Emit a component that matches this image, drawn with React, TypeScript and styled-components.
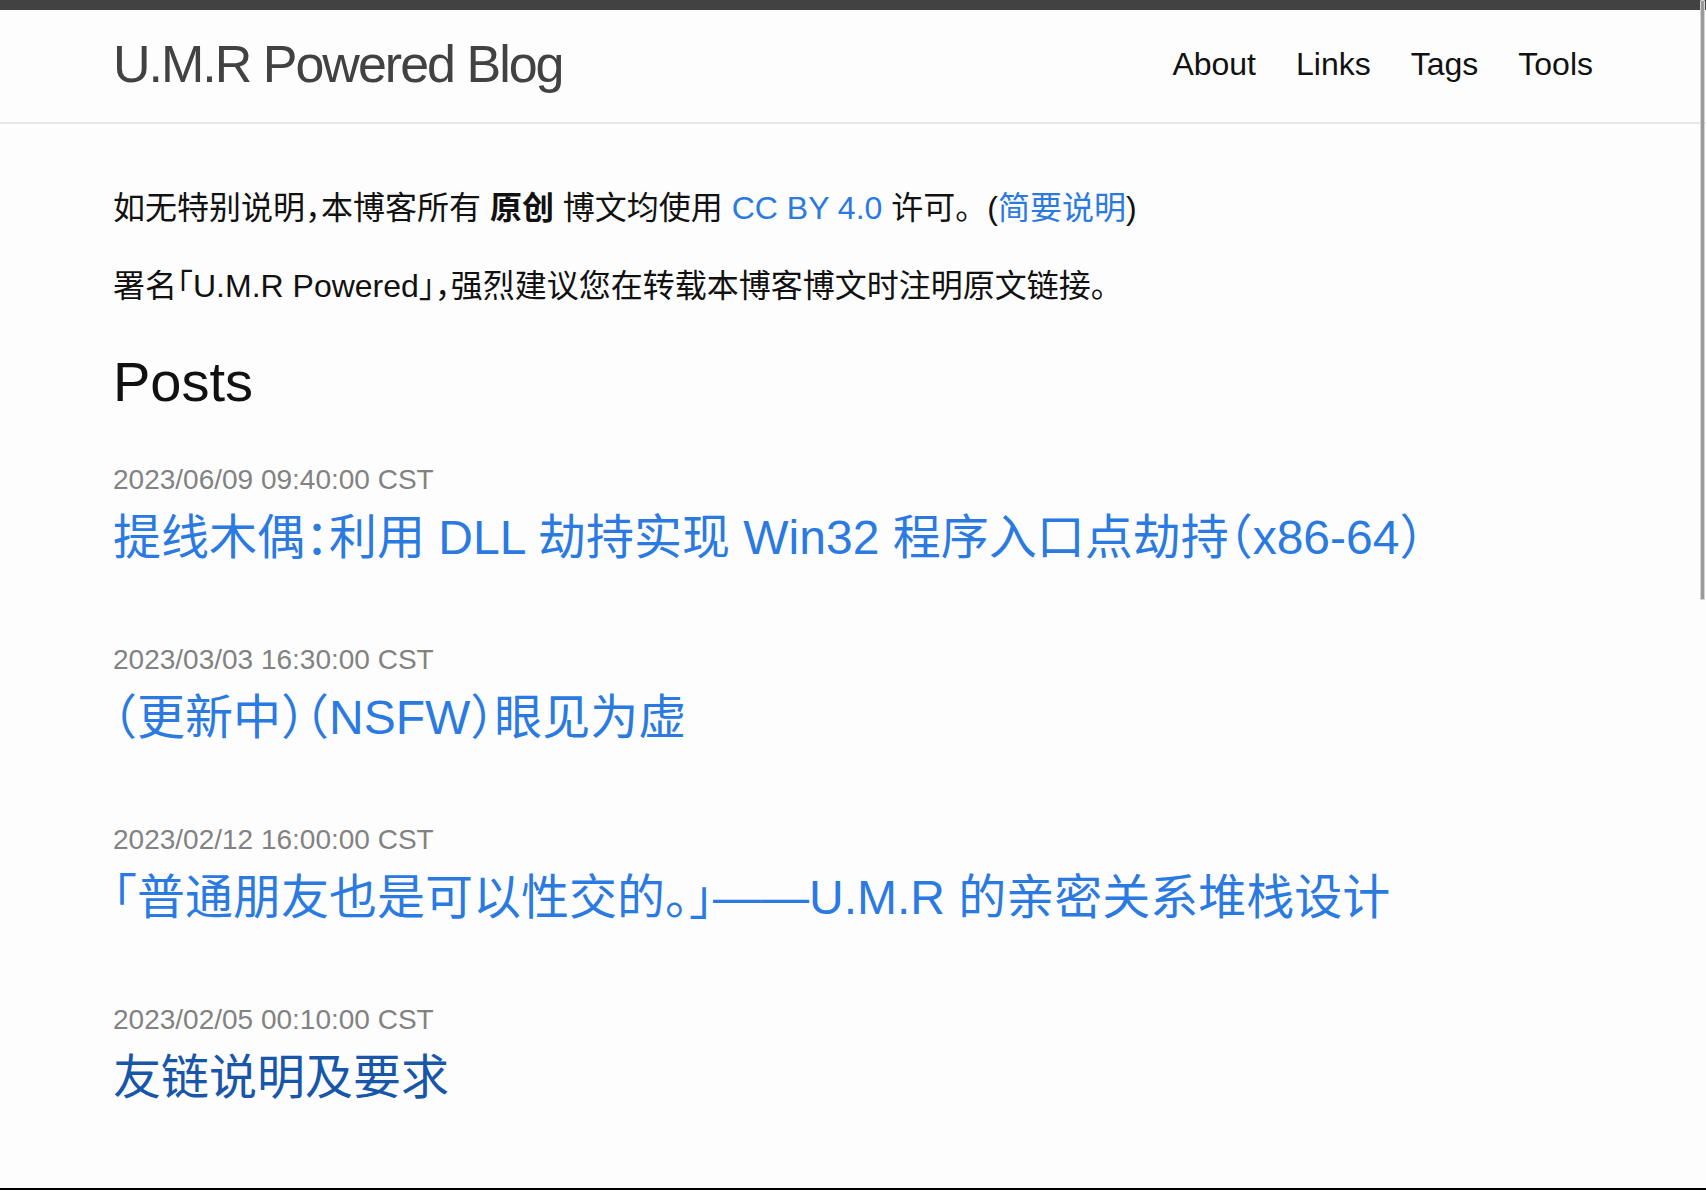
import React from "react";
import styled, { createGlobalStyle } from "styled-components";

const GlobalStyle = createGlobalStyle`
  html {
    scrollbar-width: none;
  }
  html::-webkit-scrollbar {
    display: none;
  }
  body {
    margin: 0;
    background: #fdfdfd;
    color: #111111;
    font: 400 32px/1.5 "Liberation Sans", "Noto Sans CJK SC", sans-serif;
    font-feature-settings: "halt";
    -webkit-font-smoothing: antialiased;
  }
`;

const Header = styled.header`
  border-top: 10px solid #424242;
  border-bottom: 2px solid #e8e8e8;
  min-height: 112px;
`;

const Wrapper = styled.div`
  max-width: 1480px;
  margin: 0 auto;
  padding: 0 60px;
`;

const HeaderRow = styled(Wrapper)`
  display: flex;
  justify-content: space-between;
  align-items: flex-start;
`;

const SiteTitle = styled.a`
  font-size: 52px;
  font-weight: 300;
  line-height: 108px;
  letter-spacing: -2px;
  color: #424242;
  text-decoration: none;
`;

const Nav = styled.nav`
  display: flex;
  align-items: center;
  height: 108px;
  gap: 40px;
`;

const NavLink = styled.a`
  color: #111111;
  line-height: 1.5;
  text-decoration: none;
`;

const Main = styled.main`
  padding: 60px 0;
`;

const Paragraph = styled.p`
  margin: 0 0 30px;
`;

const FullPunct = styled.span`
  font-feature-settings: normal;
`;

const Link = styled.a<{ $visited?: boolean }>`
  color: ${(p) => (p.$visited ? "#1756a9" : "#2a7ae2")};
  text-decoration: none;
`;

const Heading = styled.h2`
  font-size: 56px;
  font-weight: 400;
  line-height: 1.5;
  margin: 0 0 30px;
`;

const PostList = styled.ul`
  margin: 0;
  padding: 0;
  list-style: none;
`;

const PostItem = styled.li`
  margin-bottom: 60px;
`;

const PostMeta = styled.span`
  font-size: 28px;
  color: #828282;
`;

const PostTitle = styled.h3`
  margin: 0;
  font-weight: 400;
`;

const PostLink = styled(Link)`
  display: block;
  font-size: 48px;
  line-height: 1.5;
`;

const ScrollThumb = styled.div`
  position: fixed;
  top: 0;
  right: 1px;
  width: 3px;
  height: 598px;
  background: #9a9a9a;
  border: 1px solid #d4d4d4;
  border-radius: 1px;
`;

const BottomEdge = styled.div`
  position: fixed;
  left: 0;
  right: 0;
  bottom: 0;
  height: 2px;
  background: #000000;
`;

const posts = [
  {
    date: "2023/06/09 09:40:00 CST",
    title: "提线木偶：利用 DLL 劫持实现 Win32 程序入口点劫持（x86-64）",
    visited: false,
  },
  {
    date: "2023/03/03 16:30:00 CST",
    title: "（更新中）（NSFW）眼见为虚",
    visited: false,
  },
  {
    date: "2023/02/12 16:00:00 CST",
    title: "「普通朋友也是可以性交的。」——U.M.R 的亲密关系堆栈设计",
    visited: false,
  },
  {
    date: "2023/02/05 00:10:00 CST",
    title: "友链说明及要求",
    visited: true,
  },
];

export default function App() {
  return (
    <>
      <GlobalStyle />
      <Header>
        <HeaderRow>
          <SiteTitle href="#">U.M.R Powered Blog</SiteTitle>
          <Nav>
            <NavLink href="#">About</NavLink>
            <NavLink href="#">Links</NavLink>
            <NavLink href="#">Tags</NavLink>
            <NavLink href="#">Tools</NavLink>
          </Nav>
        </HeaderRow>
      </Header>
      <Main>
        <Wrapper>
          <Paragraph>
            如无特别说明，本博客所有 <strong>原创</strong> 博文均使用{" "}
            <Link href="#">CC BY 4.0</Link> 许可<FullPunct>。</FullPunct>(
            <Link href="#">简要说明</Link>)
          </Paragraph>
          <Paragraph>
            署名「U.M.R Powered」，强烈建议您在转载本博客博文时注明原文链接。
          </Paragraph>
          <Heading>Posts</Heading>
          <PostList>
            {posts.map((post) => (
              <PostItem key={post.date}>
                <PostMeta>{post.date}</PostMeta>
                <PostTitle>
                  <PostLink href="#" $visited={post.visited}>
                    {post.title}
                  </PostLink>
                </PostTitle>
              </PostItem>
            ))}
          </PostList>
        </Wrapper>
      </Main>
      <ScrollThumb />
      <BottomEdge />
    </>
  );
}
